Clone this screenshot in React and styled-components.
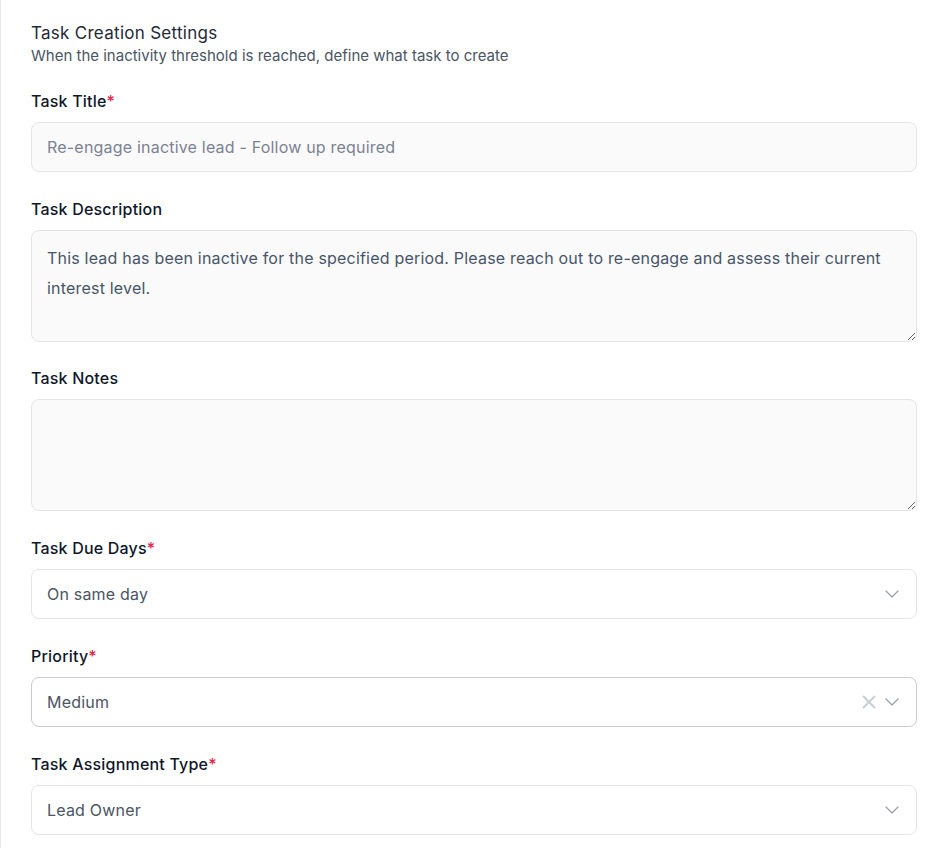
import React from "react";
import styled, { createGlobalStyle } from "styled-components";

const GlobalStyle = createGlobalStyle`
  * { box-sizing: border-box; }
  body {
    margin: 0;
    background: #ffffff;
    font-family: Inter, "Noto Sans", sans-serif;
  }
`;

const fields = [
  { id: "title", label: "Task Title", required: true, kind: "input", value: "Re-engage inactive lead - Follow up required" },
  {
    id: "description",
    label: "Task Description",
    kind: "textarea",
    value:
      "This lead has been inactive for the specified period. Please reach out to re-engage and assess their current interest level.",
  },
  { id: "notes", label: "Task Notes", kind: "textarea", value: "" },
  { id: "due", label: "Task Due Days", required: true, kind: "select", value: "On same day" },
  { id: "priority", label: "Priority", required: true, kind: "select", value: "Medium", clearable: true },
  { id: "assign", label: "Task Assignment Type", required: true, kind: "select", value: "Lead Owner" },
];

const Chevron = () => (
  <svg width="14" height="8" viewBox="0 0 14 8" fill="none" stroke="#9aa1ad" strokeWidth="1.3" strokeLinecap="round" strokeLinejoin="round">
    <path d="M1 1l6 6 6-6" />
  </svg>
);

const Cross = () => (
  <svg width="14" height="14" viewBox="0 0 14 14" fill="none" stroke="#c8ccd4" strokeWidth="1.8" strokeLinecap="round">
    <path d="M1.5 1.5l11 11M12.5 1.5l-11 11" />
  </svg>
);

const Field = ({ field }) => (
  <FieldGroup>
    <Label>
      {field.label}
      {field.required && <Required>*</Required>}
    </Label>
    {field.kind === "input" && <TextInput readOnly value={field.value} />}
    {field.kind === "textarea" && <TextArea readOnly value={field.value} />}
    {field.kind === "select" && (
      <SelectBox active={field.clearable}>
        <span>{field.value}</span>
        <Indicators>
          {field.clearable && <Cross />}
          <Chevron />
        </Indicators>
      </SelectBox>
    )}
  </FieldGroup>
);

const App = () => (
  <>
    <GlobalStyle />
    <Panel>
      <Header>
        <h3>Task Creation Settings</h3>
        <p>When the inactivity threshold is reached, define what task to create</p>
      </Header>
      {fields.map((f) => (
        <Field key={f.id} field={f} />
      ))}
    </Panel>
  </>
);

const Panel = styled.div`
  min-height: 848px;
  border-left: 1px solid #e8e9ec;
  padding: 21px 29px 20px 30px;
  display: flex;
  flex-direction: column;
  gap: 26.75px;
`;

const Header = styled.div`
  margin-bottom: -2px;

  h3 {
    margin: 0;
    font-size: 17px;
    line-height: 24px;
    font-weight: 400;
    letter-spacing: 0.28px;
    color: #1f2937;
  }

  p {
    margin: 1px 0 0;
    font-size: 15px;
    line-height: 20px;
    color: #4b5563;
  }
`;

const FieldGroup = styled.div`
  display: flex;
  flex-direction: column;
  gap: 11px;
`;

const Label = styled.label`
  font-size: 16px;
  line-height: 20px;
  font-weight: 500;
  letter-spacing: 0.2px;
  color: #0f172a;
`;

const Required = styled.span`
  color: #e11d48;
`;

const baseControl = `
  width: 100%;
  border: 1px solid #e4e5e9;
  border-radius: 8px;
  font-family: Inter, "Noto Sans", sans-serif;
  font-size: 16px;
  letter-spacing: 0.2px;
  outline: none;
`;

const TextInput = styled.input`
  ${baseControl}
  height: 50px;
  padding: 0 15px;
  background: #fafafa;
  color: #7b8293;
`;

const TextArea = styled.textarea`
  ${baseControl}
  display: block;
  height: 112px;
  padding: 12px 15px;
  line-height: 30px;
  background: #fafafa;
  color: #475569;
  resize: vertical;
`;

const SelectBox = styled.div`
  ${baseControl}
  height: 50px;
  padding: 0 17px 0 15px;
  background: #ffffff;
  border-color: ${(p) => (p.active ? "#c9ccd3" : "#e4e5e9")};
  color: #4b5563;
  display: flex;
  align-items: center;
  justify-content: space-between;
`;

const Indicators = styled.div`
  display: flex;
  align-items: center;
  gap: 9px;
`;

export default App;
